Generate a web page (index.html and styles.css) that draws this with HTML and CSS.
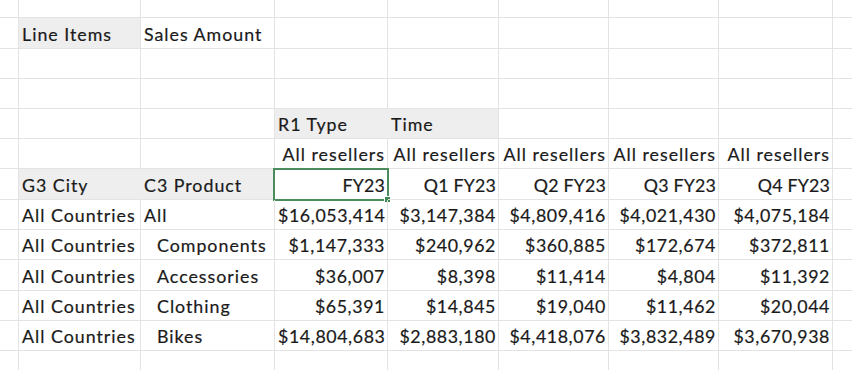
FILE: index.html
```html
<!DOCTYPE html>
<html>
<head>
<meta charset="utf-8">
<link rel="stylesheet" href="styles.css">
</head>
<body>
<table class="sheet">
  <colgroup>
    <col class="c0"><col class="c1"><col class="c2"><col class="c3"><col class="c4"><col class="c5"><col class="c6"><col class="c7"><col class="c8">
  </colgroup>
  <tr class="r0"><td></td><td></td><td></td><td></td><td></td><td></td><td></td><td></td><td></td></tr>
  <tr class="r31"><td></td><td class="hd">Line Items</td><td>Sales Amount</td><td></td><td></td><td></td><td></td><td></td><td></td></tr>
  <tr class="r30"><td></td><td></td><td></td><td></td><td></td><td></td><td></td><td></td><td></td></tr>
  <tr class="r30"><td></td><td></td><td></td><td></td><td></td><td></td><td></td><td></td><td></td></tr>
  <tr class="r30"><td></td><td></td><td></td><td class="hd hd-join">R1 Type</td><td class="hd">Time</td><td></td><td></td><td></td><td></td></tr>
  <tr class="r30"><td></td><td></td><td></td><td class="num">All resellers</td><td class="num">All resellers</td><td class="num">All resellers</td><td class="num">All resellers</td><td class="num">All resellers</td><td></td></tr>
  <tr class="r31"><td></td><td class="hd hd-join">G3 City</td><td class="hd">C3 Product</td><td class="num per sel">FY23<span class="selbox"><span class="handle"></span></span></td><td class="num per">Q1 FY23</td><td class="num per">Q2 FY23</td><td class="num per">Q3 FY23</td><td class="num per">Q4 FY23</td><td></td></tr>
  <tr class="r30"><td></td><td>All Countries</td><td>All</td><td class="num cur">$16,053,414</td><td class="num cur">$3,147,384</td><td class="num cur">$4,809,416</td><td class="num cur">$4,021,430</td><td class="num cur">$4,075,184</td><td></td></tr>
  <tr class="r30"><td></td><td>All Countries</td><td class="ind">Components</td><td class="num cur">$1,147,333</td><td class="num cur">$240,962</td><td class="num cur">$360,885</td><td class="num cur">$172,674</td><td class="num cur">$372,811</td><td></td></tr>
  <tr class="r31"><td></td><td>All Countries</td><td class="ind">Accessories</td><td class="num cur">$36,007</td><td class="num cur">$8,398</td><td class="num cur">$11,414</td><td class="num cur">$4,804</td><td class="num cur">$11,392</td><td></td></tr>
  <tr class="r30"><td></td><td>All Countries</td><td class="ind">Clothing</td><td class="num cur">$65,391</td><td class="num cur">$14,845</td><td class="num cur">$19,040</td><td class="num cur">$11,462</td><td class="num cur">$20,044</td><td></td></tr>
  <tr class="r30"><td></td><td>All Countries</td><td class="ind">Bikes</td><td class="num cur">$14,804,683</td><td class="num cur">$2,883,180</td><td class="num cur">$4,418,076</td><td class="num cur">$3,832,489</td><td class="num cur">$3,670,938</td><td></td></tr>
  <tr class="r30"><td></td><td></td><td></td><td></td><td></td><td></td><td></td><td></td><td></td></tr>
</table>
</body>
</html>
```

FILE: styles.css
```css
html, body {
  margin: 0;
  padding: 0;
  background: #ffffff;
  overflow: hidden;
}

.sheet {
  border-collapse: separate;
  border-spacing: 0;
  table-layout: fixed;
  width: 872px;
  font-family: "Lato", "Open Sans", sans-serif;
  font-size: 17.8px;
  letter-spacing: 1.0px;
  color: #1a1a1a;
  -webkit-text-stroke: 0.2px #1a1a1a;
}

.c0 { width: 19px; }
.c1 { width: 122px; }
.c2 { width: 134px; }
.c3 { width: 113px; }
.c4 { width: 111px; }
.c5 { width: 110px; }
.c6 { width: 110px; }
.c7 { width: 114px; }
.c8 { width: 39px; }

.sheet td {
  box-sizing: border-box;
  border-right: 1px solid #e3e3e3;
  border-bottom: 1px solid #e3e3e3;
  padding: 0 3px 4px 3px;
  vertical-align: bottom;
  white-space: nowrap;
  overflow: visible;
  line-height: 19px;
  position: relative;
}

.r0 td { height: 18px; }
.r30 td { height: 30px; }
.r31 td { height: 31px; }

.hd { background: #eeeeee; }
.hd-join { border-right-color: #eeeeee !important; }

.num { text-align: right; }
.num { padding-right: 2px !important; }
.per { letter-spacing: 0.2px; }
.cur { letter-spacing: 0.6px; }
.ind { padding-left: 16px !important; }

.selbox {
  position: absolute;
  left: -2px;
  top: -1px;
  right: -2px;
  bottom: -2px;
  border: 2px solid #4a8c5c;
  -webkit-text-stroke: 0;
}

.handle {
  position: absolute;
  right: -4px;
  bottom: -4px;
  width: 5px;
  height: 5px;
  background: #3f8552;
  border: 1px solid #ffffff;
}
```
